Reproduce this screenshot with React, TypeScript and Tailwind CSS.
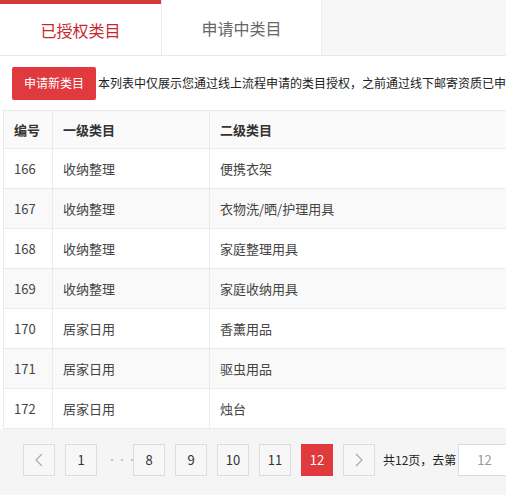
import React from 'react';

interface Row {
  id: number;
  first: string;
  second: string;
}

const rows: Row[] = [
  { id: 166, first: '收纳整理', second: '便携衣架' },
  { id: 167, first: '收纳整理', second: '衣物洗/晒/护理用具' },
  { id: 168, first: '收纳整理', second: '家庭整理用具' },
  { id: 169, first: '收纳整理', second: '家庭收纳用具' },
  { id: 170, first: '居家日用', second: '香薰用品' },
  { id: 171, first: '居家日用', second: '驱虫用品' },
  { id: 172, first: '居家日用', second: '烛台' },
];

const font = { fontFamily: '"Noto Sans CJK SC", "Liberation Sans", sans-serif' };

const PageButton: React.FC<{ label: React.ReactNode; active?: boolean }> = ({ label, active }) => (
  <div
    className={`shrink-0 w-[32px] h-[32px] flex items-center justify-center text-[13px] border ${
      active ? 'bg-[#e0393e] border-[#e0393e] text-white' : 'bg-[#f7f7f7] border-[#dcdcdc] text-[#333]'
    }`}
  >
    {label}
  </div>
);

const Chevron: React.FC<{ dir: 'left' | 'right' }> = ({ dir }) => (
  <svg width="8" height="14" viewBox="0 0 8 14" fill="none" stroke="#aaa" strokeWidth="1.2">
    {dir === 'left' ? <path d="M7 1 1 7l6 6" /> : <path d="M1 1l6 6-6 6" />}
  </svg>
);

export default function App() {
  return (
    <div className="w-[506px] h-[495px] overflow-hidden bg-[#f5f5f5]" style={font}>
      {/* Tabs */}
      <div className="flex h-[56px] border-b border-[#e8e8e8] bg-[#f7f7f7]">
        <div className="w-[161px] bg-white border-t-[4px] border-[#d23a3a] flex items-center justify-center text-[16px] text-[#c8252b]">
          已授权类目
        </div>
        <div className="w-[161px] bg-white border-l border-r border-[#ececec] flex items-center justify-center text-[16px] text-[#666]">
          申请中类目
        </div>
      </div>

      {/* Notice */}
      <div className="bg-white h-[54px] flex items-center pl-[12px] whitespace-nowrap overflow-hidden">
        <button className="h-[33px] px-[12px] bg-[#e0393e] text-white text-[12px] rounded-[2px] shrink-0">
          申请新类目
        </button>
        <span className="ml-[2px] text-[12px] text-[#222]">
          本列表中仅展示您通过线上流程申请的类目授权，之前通过线下邮寄资质已申
        </span>
      </div>

      {/* Table */}
      <div className="bg-white pl-[3px] border-l-[3px] border-[#f5f5f5] -ml-[3px]">
        <table className="w-[520px] border-collapse text-[13px] table-fixed">
          <colgroup>
            <col className="w-[49px]" />
            <col className="w-[157px]" />
            <col />
          </colgroup>
          <thead>
            <tr className="h-[38px] bg-[#fafafa] border-t border-b border-[#eaeaea]">
              <th className="text-left font-bold text-[#333] pl-[10px] border-l border-r border-[#eaeaea]">编号</th>
              <th className="text-left font-bold text-[#333] pl-[10px] border-r border-[#eaeaea]">一级类目</th>
              <th className="text-left font-bold text-[#333] pl-[10px]">二级类目</th>
            </tr>
          </thead>
          <tbody>
            {rows.map((r, i) => (
              <tr key={r.id} className={`h-[40px] border-b border-[#eaeaea] ${i % 2 === 1 ? 'bg-[#f9f9f9]' : 'bg-white'}`}>
                <td className="pl-[10px] text-[#444] border-l border-r border-[#eaeaea]">{r.id}</td>
                <td className="pl-[10px] text-[#444] border-r border-[#eaeaea]">{r.first}</td>
                <td className="pl-[10px] text-[#444]">{r.second}</td>
              </tr>
            ))}
          </tbody>
        </table>
      </div>

      {/* Pagination */}
      <div className="flex items-center pt-[15px] pl-[23px] gap-[10px] whitespace-nowrap">
        <PageButton label={<Chevron dir="left" />} />
        <PageButton label="1" />
        <span className="shrink-0 w-[16px] text-center text-[#bbb] text-[10px] leading-none">···</span>
        <PageButton label="8" />
        <PageButton label="9" />
        <PageButton label="10" />
        <PageButton label="11" />
        <PageButton label="12" active />
        <PageButton label={<Chevron dir="right" />} />
        <div className="shrink-0 flex items-center -ml-[2px] gap-[2px]">
          <span className="text-[12px] text-[#222]">共12页，去第</span>
          <div className="w-[60px] h-[32px] bg-white border border-[#dcdcdc] flex items-center pl-[18px] text-[13px] text-[#999]">
            12
          </div>
        </div>
      </div>
    </div>
  );
}
